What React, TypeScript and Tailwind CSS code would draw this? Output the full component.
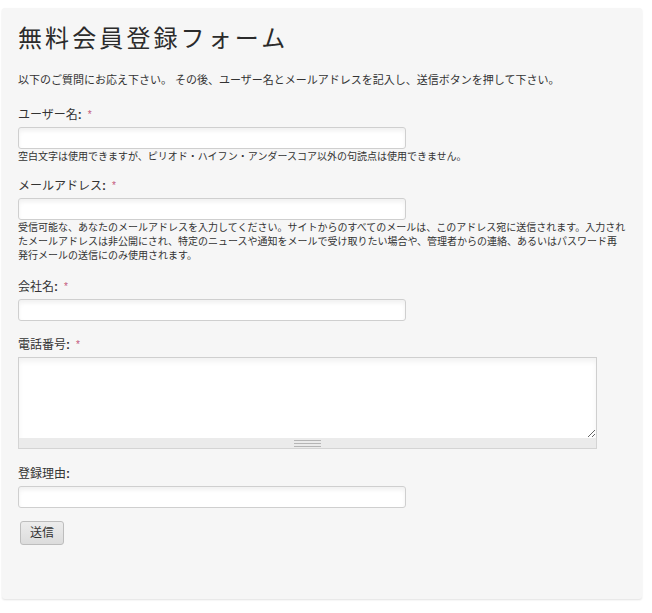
import React from 'react';

const jp = { fontFamily: '"Liberation Sans", "Noto Sans CJK JP", sans-serif' };

const Required = () => (
  <span className="ml-[6px] text-[10px] font-normal text-[#c2567a]">*</span>
);

const Label = ({ text, required }: { text: string; required?: boolean }) => (
  <label className="flex h-[16px] items-center text-[12px] leading-[16px] text-[#333]">
    {text}
    <span className="font-bold">:</span>
    {required && <Required />}
  </label>
);

const TextInput = () => (
  <input
    type="text"
    className="mt-[4px] block h-[22px] w-[388px] rounded-[3px] border border-[#cfcfcf] bg-white px-1 text-[12px] shadow-[inset_0_3px_4px_rgba(0,0,0,0.06)] outline-none"
  />
);

const App: React.FC = () => {
  return (
    <div className="min-h-[613px] bg-white pt-[8px] pl-[2px]" style={jp}>
      <div className="h-[591px] w-[640px] rounded-[3px] bg-[#f6f6f6] px-[16px] pt-[14px] shadow-[0_1px_2px_rgba(0,0,0,0.12)]">
        <h1 className="h-[34px] text-[24px] leading-[34px] tracking-[3.1px] text-[#2b2b2b]">無料会員登録フォーム</h1>

        <p className="mt-[16px] h-[16px] text-[11px] leading-[16px] text-[#333]">
          以下のご質問にお応え下さい。 その後、ユーザー名とメールアドレスを記入し、送信ボタンを押して下さい。
        </p>

        <div className="mt-[19px]">
          <Label text="ユーザー名" required />
          <TextInput />
          <p className="mt-[1px] text-[10px] leading-[14px] text-[#333]">
            空白文字は使用できますが、ピリオド・ハイフン・アンダースコア以外の句読点は使用できません。
          </p>
        </div>

        <div className="mt-[14px]">
          <Label text="メールアドレス" required />
          <TextInput />
          <p className="mt-[1px] text-[10px] leading-[14px] text-[#333]">
            受信可能な、あなたのメールアドレスを入力してください。サイトからのすべてのメールは、このアドレス宛に送信されます。入力され
            <br />
            たメールアドレスは非公開にされ、特定のニュースや通知をメールで受け取りたい場合や、管理者からの連絡、あるいはパスワード再
            <br />
            発行メールの送信にのみ使用されます。
          </p>
        </div>

        <div className="mt-[16px]">
          <Label text="会社名" required />
          <TextInput />
        </div>

        <div className="mt-[16px]">
          <Label text="電話番号" required />
          <div className="mt-[4px] w-[579px]">
            <textarea className="block h-[81px] w-full resize-y border border-b-0 border-[#cfcfcf] bg-white shadow-[inset_0_4px_5px_rgba(0,0,0,0.05)] outline-none" />
            <div className="flex h-[11px] items-center justify-center border border-t-0 border-[#d4d4d4] bg-[#ebebeb]">
              <div className="flex w-[27px] flex-col gap-[2px]">
                <div className="h-px bg-[#b5b5b5]" />
                <div className="h-px bg-[#b5b5b5]" />
                <div className="h-px bg-[#b5b5b5]" />
              </div>
            </div>
          </div>
        </div>

        <div className="mt-[17px]">
          <Label text="登録理由" />
          <TextInput />
        </div>

        <button
          type="button"
          className="mt-[13px] ml-[2px] h-[24px] w-[44px] rounded-[3px] border border-[#bdbdbd] bg-gradient-to-b from-[#ececec] to-[#dcdcdc] text-[12px] text-[#333]"
        >
          送信
        </button>
      </div>
    </div>
  );
};

export default App;
